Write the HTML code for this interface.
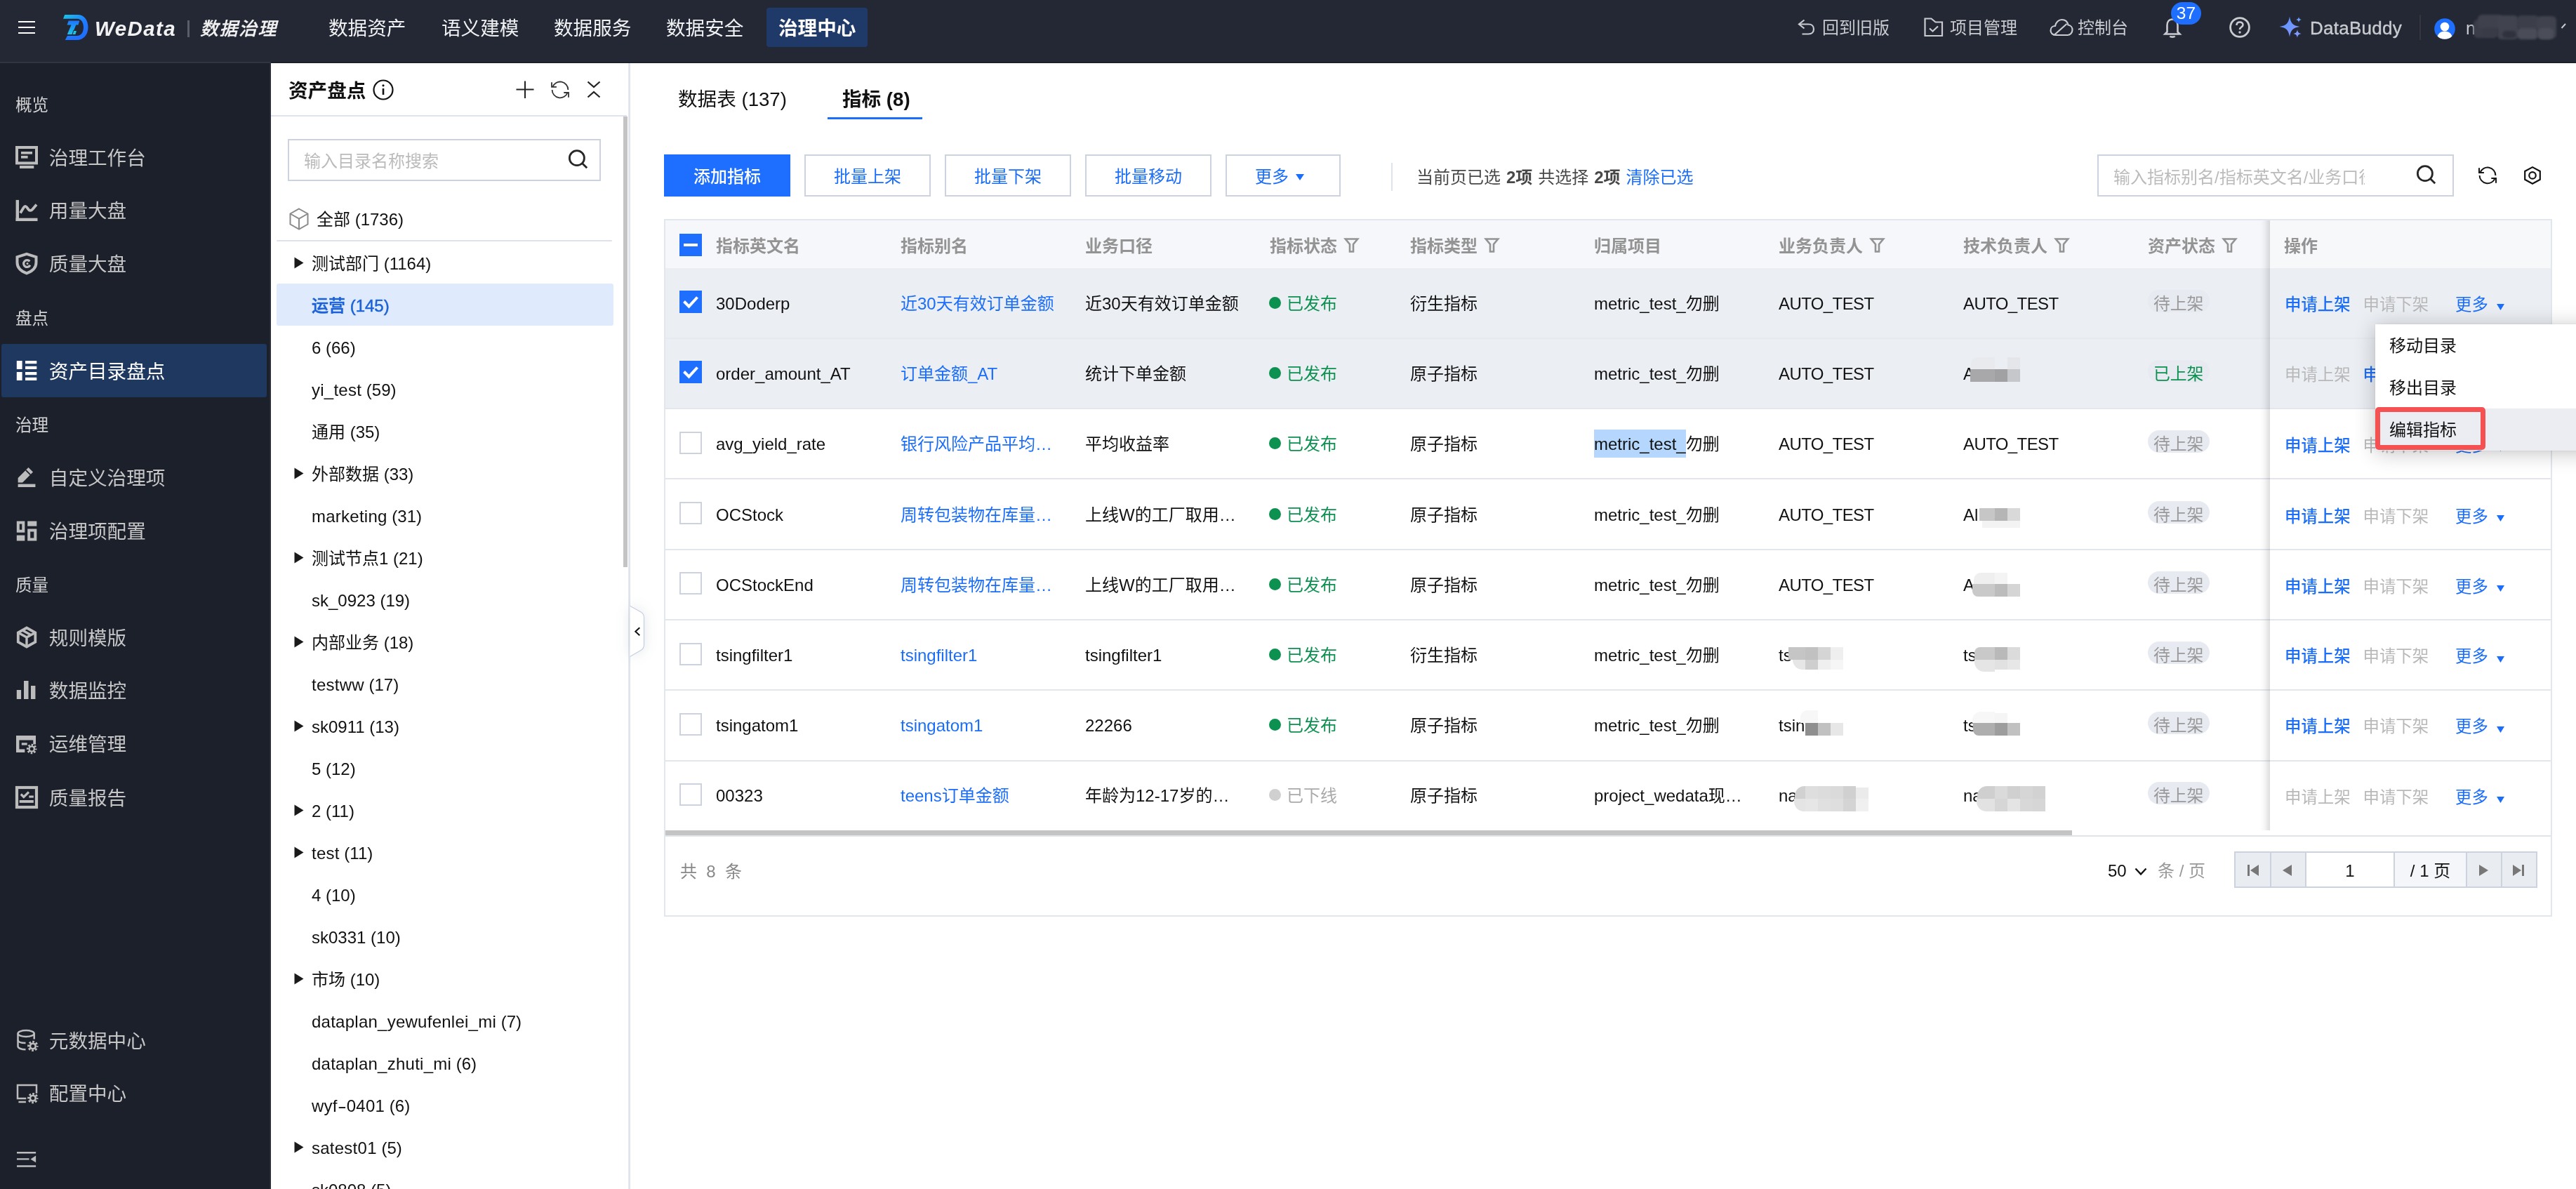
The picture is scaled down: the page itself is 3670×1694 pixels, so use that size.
<!DOCTYPE html><html lang="zh-CN"><head><meta charset="utf-8"><title>WeData 数据治理</title><style>
*{box-sizing:border-box;margin:0;padding:0}
html,body{width:3670px;height:1694px;overflow:hidden;background:#fff}
body{font-family:"Liberation Sans","Noto Sans CJK SC",sans-serif;position:relative;color:#000;-webkit-font-smoothing:antialiased}
.t{position:absolute;white-space:nowrap}
.a{position:absolute}
svg{position:absolute;overflow:visible}
</style></head><body><div id="root" style="position:absolute;left:0;top:0;width:3670px;height:1694px;will-change:transform">
<div class="a" style="left:0;top:0;width:3670px;height:90px;background:#242835"></div>
<div class="a" style="left:0;top:88px;width:3670px;height:2px;background:#1d202b"></div>
<div class="a" style="left:26px;top:29.8px;width:24px;height:2.4px;background:#fff"></div>
<div class="a" style="left:26px;top:37.8px;width:24px;height:2.4px;background:#fff"></div>
<div class="a" style="left:26px;top:45.8px;width:24px;height:2.4px;background:#fff"></div>
<svg style="left:90px;top:20.800px" width="36" height="36" viewBox="0 0 36 36">
<defs><linearGradient id="lg" x1="0" y1="0" x2="0.700" y2="1"><stop offset="0" stop-color="#19c8e6"/><stop offset="0.550" stop-color="#1f7cff"/><stop offset="1" stop-color="#1f6dff"/></linearGradient>
<linearGradient id="lg2" x1="0" y1="0" x2="0" y2="1"><stop offset="0" stop-color="#1f74ff"/><stop offset="1" stop-color="#19c4e8"/></linearGradient></defs>
<path d="M2.200 0 H20.500 C30 0 35.500 7.500 35.500 18 C35.500 28.500 29 36 19.500 36 H2.800 L6 30.100 H19.500 C25.500 30.100 29 25 29 18 C29 11 25.500 5.800 20 5.800 H0 Z" fill="url(#lg)"/>
<path d="M7.700 8.400 H23.300 L21.400 14.400 H18.300 L12.700 28 H5.800 L11.500 14.400 H5.600 Z" fill="url(#lg2)"/>
<path d="M14.300 22.300 H19.600 L17.700 28 H12.700 Z" fill="#242835"/>
<path d="M15.200 23.100 H19 L17.400 28 H13.600 Z" fill="#1ac6e4"/>
</svg>
<div class="t " style="left:135px;top:16.4px;height:50px;line-height:50px;font-size:29.5px;color:#f2f2f2;font-weight:700;font-style:italic;letter-spacing:1.400px">WeData</div>
<div class="a" style="left:267.300px;top:29px;width:2.300px;height:24px;background:#5a5e6b"></div>
<div class="t " style="left:285px;top:15.799999999999997px;height:50px;line-height:50px;font-size:26px;color:#f2f2f2;font-weight:500;font-style:italic;letter-spacing:1.500px;-webkit-text-stroke:0.300px #f2f2f2">数据治理</div>
<div class="t " style="left:468px;top:15.5px;height:50px;line-height:50px;font-size:27.6px;color:#f0f1f3;font-weight:400;">数据资产</div>
<div class="t " style="left:629px;top:15.5px;height:50px;line-height:50px;font-size:27.6px;color:#f0f1f3;font-weight:400;">语义建模</div>
<div class="t " style="left:789px;top:15.5px;height:50px;line-height:50px;font-size:27.6px;color:#f0f1f3;font-weight:400;">数据服务</div>
<div class="t " style="left:949px;top:15.5px;height:50px;line-height:50px;font-size:27.6px;color:#f0f1f3;font-weight:400;">数据安全</div>
<div class="a" style="left:1092px;top:11px;width:144px;height:56px;background:#1f3a68;border-radius:4px"></div>
<div class="t " style="left:1109px;top:15.5px;height:50px;line-height:50px;font-size:27.6px;color:#fff;font-weight:700;">治理中心</div>
<svg style="left:2561px;top:27px" width="26" height="24" viewBox="0 0 26 24" fill="none" stroke="#c9cbcf" stroke-width="2.200">
<path d="M9.500 1.500 L2 7.500 L9.500 13.500"/><path d="M2.500 7.500 H15.500 C20.500 7.500 23 10.500 23 14.500 C23 18.500 20.500 21.500 15.500 21.500 H6.500"/></svg>
<div class="t " style="left:2596px;top:14.5px;height:50px;line-height:50px;font-size:24px;color:#c9cbcf;font-weight:400;">回到旧版</div>
<svg style="left:2741px;top:25px" width="28" height="28" viewBox="0 0 28 28" fill="none" stroke="#c9cbcf" stroke-width="2.200">
<path d="M1.500 1.500 H10.500 L16.500 6.500 H26 V26 H1.500 Z"/><path d="M8 15.500 L12.500 19.500 L20 12.500"/></svg>
<div class="t " style="left:2778px;top:14.5px;height:50px;line-height:50px;font-size:24px;color:#c9cbcf;font-weight:400;">项目管理</div>
<svg style="left:2920px;top:26px" width="34" height="26" viewBox="0 0 34 26" fill="none" stroke="#c9cbcf" stroke-width="2.200">
<path d="M9 24 C4.500 24 1.500 21 1.500 17.500 C1.500 13.500 4.500 11 8 11 C9 5.500 13 2 17.500 2 C22.500 2 25.500 5 26.500 9.500 C30 10 32.500 13 32.500 16.500 C32.500 21 29 24 25.500 24 Z"/><path d="M24.500 8 L7 23.500"/></svg>
<div class="t " style="left:2960px;top:14.5px;height:50px;line-height:50px;font-size:24px;color:#c9cbcf;font-weight:400;">控制台</div>
<svg style="left:3083px;top:26px" width="24" height="28" viewBox="0 0 24 28" fill="none" stroke="#c9cbcf" stroke-width="2.600">
<path d="M12 1.500 C7 1.500 4.500 5.500 4.500 10 V19.500 L1.500 22.500 H22.500 L19.500 19.500 V10 C19.500 5.500 17 1.500 12 1.500 Z"/><path d="M8.500 25.500 C9.500 27 14.500 27 15.500 25.500"/></svg>
<div class="a" style="left:3093px;top:3px;width:43px;height:32px;border-radius:16px;background:#1e6fff"></div>
<div class="t " style="left:3093px;top:4.0px;height:30px;line-height:30px;font-size:24.5px;color:#fff;font-weight:400;width:43px;text-align:center">37</div>
<svg style="left:3176px;top:24px" width="30" height="30" viewBox="0 0 30 30" fill="none" stroke="#c9cbcf" stroke-width="2.800">
<circle cx="15" cy="15" r="13.400"/><path d="M10.500 12 C10.500 9 12.500 7.500 15 7.500 C17.500 7.500 19.500 9 19.500 11.500 C19.500 14.500 15 14.500 15 18" stroke-width="2.600"/><circle cx="15" cy="22" r="1.700" fill="#c9cbcf" stroke="none"/></svg>
<svg style="left:3247px;top:23px" width="34" height="32" viewBox="0 0 34 32">
<defs><linearGradient id="sg" x1="0" y1="0" x2="1" y2="1"><stop offset="0" stop-color="#4f97ff"/><stop offset="1" stop-color="#8f95ff"/></linearGradient></defs>
<path d="M15 0.500 C16.500 10 19.500 13.500 29.500 15 C19.500 16.500 16.500 20 15 29.500 C13.500 20 10.500 16.500 0.500 15 C10.500 13.500 13.500 10 15 0.500 Z" fill="url(#sg)"/>
<path d="M28 1 C28.400 3.600 29.400 4.600 32 5 C29.400 5.400 28.400 6.400 28 9 C27.600 6.400 26.600 5.400 24 5 C26.600 4.600 27.600 3.600 28 1 Z" fill="#6ea0ff"/>
<path d="M26 19 C26.600 23 28 24.400 32 25 C28 25.600 26.600 27 26 31 C25.400 27 24 25.600 20 25 C24 24.400 25.400 23 26 19 Z" fill="#7f9aff"/>
</svg>
<div class="t " style="left:3291px;top:15.0px;height:50px;line-height:50px;font-size:26px;color:#c9cbcf;font-weight:400;letter-spacing:0.25px;-webkit-text-stroke:0.4px #c9cbcf">DataBuddy</div>
<div class="a" style="left:3447px;top:21px;width:2px;height:36px;background:#35363d"></div>
<svg style="left:3468px;top:26px" width="30" height="30" viewBox="0 0 30 30">
<defs><clipPath id="av"><circle cx="15" cy="15" r="14.800"/></clipPath></defs>
<circle cx="15" cy="15" r="14.800" fill="#1e6fff"/>
<g clip-path="url(#av)" fill="#fff"><circle cx="15" cy="12" r="6.300"/><path d="M3.500 30 C4.500 22 9 18.500 15 18.500 C21 18.500 25.500 22 26.500 30 Z"/></g></svg>
<div class="t " style="left:3513px;top:15.0px;height:50px;line-height:50px;font-size:25px;color:#c9cbcf;font-weight:400;">n</div>
<div class="a" style="left:3524px;top:28px;width:34px;height:26px;background:#3b3e49;filter:blur(1.5px);border-radius:6px"></div>
<div class="a" style="left:3530px;top:21px;width:36px;height:20px;background:#3f424d;filter:blur(1.5px);border-radius:6px"></div>
<div class="a" style="left:3558px;top:22px;width:30px;height:34px;background:#41444f;filter:blur(1.5px);border-radius:6px"></div>
<div class="a" style="left:3586px;top:22px;width:32px;height:20px;background:#3c3f4a;filter:blur(1.5px);border-radius:6px"></div>
<div class="a" style="left:3586px;top:40px;width:30px;height:16px;background:#4a4d58;filter:blur(1.5px);border-radius:6px"></div>
<div class="a" style="left:3614px;top:23px;width:28px;height:32px;background:#40434e;filter:blur(1.5px);border-radius:6px"></div>
<div class="a" style="left:3536px;top:40px;width:24px;height:12px;background:#393c47;filter:blur(1.5px);border-radius:6px"></div>
<div class="a" style="left:3616px;top:40px;width:22px;height:16px;background:#4b4e59;filter:blur(1.5px);border-radius:6px"></div>
<div class="a" style="left:3565px;top:44px;width:20px;height:10px;background:#30333e;filter:blur(1.5px);border-radius:6px"></div>
<svg style="left:3649px;top:33px" width="8" height="8" viewBox="0 0 8 8" fill="none" stroke="#c9cbcf" stroke-width="2"><path d="M0.500 7 L6 1"/></svg>
<div class="a" style="left:0;top:90px;width:386px;height:1604px;background:#1c202b"></div>
<div class="a" style="left:0;top:88px;width:386px;height:2px;background:#2f3441"></div>
<div class="a" style="left:384px;top:90px;width:2px;height:1604px;background:#2a2e3a"></div>
<div class="a" style="left:2px;top:490px;width:378px;height:76px;background:#1f3860;border-radius:3px"></div>
<div class="t " style="left:22px;top:129.5px;height:40px;line-height:40px;font-size:23.6px;color:#d2d2d3;font-weight:400;">概览</div>
<div class="t " style="left:22px;top:433.5px;height:40px;line-height:40px;font-size:23.6px;color:#d2d2d3;font-weight:400;">盘点</div>
<div class="t " style="left:22px;top:585.5px;height:40px;line-height:40px;font-size:23.6px;color:#d2d2d3;font-weight:400;">治理</div>
<div class="t " style="left:22px;top:813.5px;height:40px;line-height:40px;font-size:23.6px;color:#d2d2d3;font-weight:400;">质量</div>
<svg style="left:22px;top:208px" width="32" height="32" viewBox="0 0 32 32" fill="none" stroke="#bcbcbd" stroke-width="4"><rect x="2" y="2" width="28" height="22.400"/><rect x="8" y="8" width="16" height="3.600" fill="#bcbcbd" stroke="none"/><rect x="8" y="13.900" width="9.600" height="3.700" fill="#bcbcbd" stroke="none"/><rect x="6" y="28" width="20.300" height="4" fill="#bcbcbd" stroke="none"/></svg>
<div class="t " style="left:69.8px;top:203.5px;height:44px;line-height:44px;font-size:27.6px;color:#c6c6c7;font-weight:400;">治理工作台</div>
<svg style="left:22px;top:283px" width="32" height="32" viewBox="0 0 32 32" fill="none" stroke="#bcbcbd" stroke-width="4"><rect x="0.600" y="1.900" width="4.400" height="30.100" fill="#bcbcbd" stroke="none"/><rect x="0.600" y="27.700" width="30.900" height="4.300" fill="#bcbcbd" stroke="none"/><path d="M7 20.500 L11.500 13 C13.500 10 15.500 10.500 17.500 14 C19.500 17.500 22 18 24.500 15 L30 8.500" stroke-width="3.800"/></svg>
<div class="t " style="left:69.8px;top:278.5px;height:44px;line-height:44px;font-size:27.6px;color:#c6c6c7;font-weight:400;">用量大盘</div>
<svg style="left:22px;top:359px" width="32" height="32" viewBox="0 0 32 32" fill="none" stroke="#bcbcbd" stroke-width="4"><path d="M16 2.800 L29.500 7.200 V15 C29.500 22.500 24 27.500 16 30.300 C8 27.500 2.500 22.500 2.500 15 V7.200 Z" stroke-width="4"/><path d="M20.300 13.400 A4.900 4.900 0 1 0 20.900 18.800" stroke-width="3.200"/><circle cx="17" cy="16.400" r="1.500" fill="#bcbcbd" stroke="none"/></svg>
<div class="t " style="left:69.8px;top:354.5px;height:44px;line-height:44px;font-size:27.6px;color:#c6c6c7;font-weight:400;">质量大盘</div>
<svg style="left:22px;top:512px" width="32" height="32" viewBox="0 0 32 32" fill="none" stroke="#fff" stroke-width="4"><rect x="1.800" y="2" width="7.800" height="12" fill="#fff" stroke="none"/><rect x="1.800" y="18" width="7.800" height="12" fill="#fff" stroke="none"/><rect x="14" y="2" width="16.300" height="4.200" fill="#fff" stroke="none"/><rect x="14" y="9.8" width="16.300" height="4.200" fill="#fff" stroke="none"/><rect x="14" y="18" width="16.300" height="4.200" fill="#fff" stroke="none"/><rect x="14" y="25.8" width="16.300" height="4.200" fill="#fff" stroke="none"/></svg>
<div class="t " style="left:69.8px;top:507.5px;height:44px;line-height:44px;font-size:27.6px;color:#fff;font-weight:400;">资产目录盘点</div>
<svg style="left:22px;top:664px" width="32" height="32" viewBox="0 0 32 32" fill="none" stroke="#bcbcbd" stroke-width="4"><path d="M3.600 23.500 V17 L18.500 2.100 L25 8.600 L10.100 23.500 Z" fill="#bcbcbd" stroke="none"/><path d="M14.800 5.800 L21.300 12.300" stroke="#1c202b" stroke-width="1.800"/><rect x="3.600" y="25.600" width="24.800" height="4.400" fill="#bcbcbd" stroke="none"/></svg>
<div class="t " style="left:69.8px;top:659.5px;height:44px;line-height:44px;font-size:27.6px;color:#c6c6c7;font-weight:400;">自定义治理项</div>
<svg style="left:22px;top:740px" width="32" height="32" viewBox="0 0 32 32" fill="none" stroke="#bcbcbd" stroke-width="4"><rect x="3.800" y="4.500" width="7.500" height="12.200"/><rect x="19.200" y="15.500" width="9.100" height="13"/><rect x="17.200" y="2.500" width="13.100" height="7.100" fill="#bcbcbd" stroke="none"/><rect x="1.800" y="22.600" width="11.500" height="7.900" fill="#bcbcbd" stroke="none"/></svg>
<div class="t " style="left:69.8px;top:735.5px;height:44px;line-height:44px;font-size:27.6px;color:#c6c6c7;font-weight:400;">治理项配置</div>
<svg style="left:22px;top:892px" width="32" height="32" viewBox="0 0 32 32" fill="none" stroke="#bcbcbd" stroke-width="4"><path d="M16 2.500 L28.300 9.300 V22.700 L16 29.500 L3.800 22.700 V9.300 Z" stroke-width="3.800"/><path d="M3.800 9.300 L16 16 L28.300 9.300 M16 16 V29.500 M10 6 L22.200 12.700" stroke-width="3.400"/></svg>
<div class="t " style="left:69.8px;top:887.5px;height:44px;line-height:44px;font-size:27.6px;color:#c6c6c7;font-weight:400;">规则模版</div>
<svg style="left:22px;top:967px" width="32" height="32" viewBox="0 0 32 32" fill="none" stroke="#bcbcbd" stroke-width="4"><rect x="1.800" y="16" width="6.300" height="13" fill="#bcbcbd" stroke="none"/><rect x="12" y="3" width="6.500" height="26" fill="#bcbcbd" stroke="none"/><rect x="22" y="10" width="6.400" height="19" fill="#bcbcbd" stroke="none"/></svg>
<div class="t " style="left:69.8px;top:962.5px;height:44px;line-height:44px;font-size:27.6px;color:#c6c6c7;font-weight:400;">数据监控</div>
<svg style="left:22px;top:1043px" width="32" height="32" viewBox="0 0 32 32" fill="none" stroke="#bcbcbd" stroke-width="4"><rect x="1" y="5" width="28" height="6.500" fill="#bcbcbd" stroke="none"/><rect x="1" y="5" width="4.400" height="24" fill="#bcbcbd" stroke="none"/><rect x="1" y="24.400" width="12.300" height="4.600" fill="#bcbcbd" stroke="none"/><rect x="8.800" y="15.300" width="7.900" height="3.300" fill="#bcbcbd" stroke="none"/><rect x="25.300" y="5" width="3.700" height="12.500" fill="#bcbcbd" stroke="none"/><circle cx="23.2" cy="24" r="4.8" fill="#bcbcbd" stroke="none"/><circle cx="23.2" cy="24" r="5.8" fill="none" stroke="#bcbcbd" stroke-width="3" stroke-dasharray="2.505 2.050" stroke-dashoffset="1.253"/><circle cx="23.2" cy="24" r="2.500" fill="#1c202b" stroke="none"/></svg>
<div class="t " style="left:69.8px;top:1038.5px;height:44px;line-height:44px;font-size:27.6px;color:#c6c6c7;font-weight:400;">运维管理</div>
<svg style="left:22px;top:1120px" width="32" height="32" viewBox="0 0 32 32" fill="none" stroke="#bcbcbd" stroke-width="4"><rect x="2" y="2" width="28" height="28" stroke-width="4.200"/><path d="M7.800 11.500 L11.800 15.500 L19 8.500" stroke-width="3.200"/><rect x="19.300" y="13.500" width="6.500" height="3.100" fill="#bcbcbd" stroke="none"/><rect x="5.700" y="20" width="20.100" height="3.800" fill="#bcbcbd" stroke="none"/></svg>
<div class="t " style="left:69.8px;top:1115.5px;height:44px;line-height:44px;font-size:27.6px;color:#c6c6c7;font-weight:400;">质量报告</div>
<svg style="left:22px;top:1466px" width="32" height="32" viewBox="0 0 32 32" fill="none" stroke="#bcbcbd" stroke-width="4"><ellipse cx="15.100" cy="6.500" rx="11.600" ry="4.400" stroke-width="2.500"/><path d="M3.500 6.500 V24.500 C3.500 27.500 8.500 29.300 14.500 29.300" stroke-width="2.500"/><path d="M26.700 6.500 V14.500" stroke-width="2.500"/><path d="M3.500 15.500 C3.500 18.500 8.500 20 14.500 20" stroke-width="2.500"/><circle cx="24.8" cy="24.4" r="5.2" fill="#bcbcbd" stroke="none"/><circle cx="24.8" cy="24.4" r="6.2" fill="none" stroke="#bcbcbd" stroke-width="3" stroke-dasharray="2.678 2.191" stroke-dashoffset="1.339"/><circle cx="24.8" cy="24.4" r="2.500" fill="#1c202b" stroke="none"/></svg>
<div class="t " style="left:69.8px;top:1461.5px;height:44px;line-height:44px;font-size:27.6px;color:#c6c6c7;font-weight:400;">元数据中心</div>
<svg style="left:22px;top:1541px" width="32" height="32" viewBox="0 0 32 32" fill="none" stroke="#bcbcbd" stroke-width="4"><path d="M15.300 24 H3 V4.900 H30 V16.700" stroke-width="2.500"/><path d="M4.400 29 H14.900" stroke-width="2.500"/><circle cx="24.8" cy="23.6" r="5.2" fill="#bcbcbd" stroke="none"/><circle cx="24.8" cy="23.6" r="6.2" fill="none" stroke="#bcbcbd" stroke-width="3" stroke-dasharray="2.678 2.191" stroke-dashoffset="1.339"/><circle cx="24.8" cy="23.6" r="2.500" fill="#1c202b" stroke="none"/></svg>
<div class="t " style="left:69.8px;top:1536.5px;height:44px;line-height:44px;font-size:27.6px;color:#c6c6c7;font-weight:400;">配置中心</div>
<svg style="left:24.300px;top:1639px" width="28" height="26" viewBox="0 0 28 26" fill="none" stroke="#bcbcbd" stroke-width="2.400">
<path d="M0 3.300 H27.100 M0 12.400 H17.500 M0 22.500 H27.100"/><path d="M27.100 7.500 L19.500 12.400 L27.100 17.300 Z" fill="#bcbcbd" stroke="none"/></svg>
<div class="a" style="left:386px;top:90px;width:508px;height:1604px;background:#fff"></div>
<div class="a" style="left:894.500px;top:90px;width:3px;height:1604px;background:linear-gradient(90deg,#e6eaf1,#dce1ea)"></div>
<div class="t " style="left:411px;top:107.5px;height:44px;line-height:44px;font-size:27.6px;color:#111;font-weight:700;">资产盘点</div>
<svg style="left:531px;top:113px" width="30" height="30" viewBox="0 0 30 30" fill="none" stroke="#111" stroke-width="2.200">
<circle cx="15" cy="15" r="13.500"/><path d="M15 13 V22" stroke-width="2.600"/><circle cx="15" cy="8.800" r="1.600" fill="#111" stroke="none"/></svg>
<svg style="left:735px;top:115px" width="26" height="26" viewBox="0 0 26 26" fill="none" stroke="#222" stroke-width="2">
<path d="M13 0.500 V25 M0.500 12.500 H25.500"/></svg>
<svg style="left:784px;top:113.500px" width="28" height="28" viewBox="0 0 28 28" fill="none" stroke="#333" stroke-width="1.800">
<path d="M25.400 13.900 A11.400 11.400 0 0 0 3.300 10"/><path d="M2 3.200 V9.900 H8.900"/>
<path d="M2.600 13.900 A11.400 11.400 0 0 0 24.700 17.800"/><path d="M19.300 18 H26 V24.800"/></svg>
<svg style="left:836px;top:115px" width="20" height="25" viewBox="0 0 20 25" fill="none" stroke="#222" stroke-width="2.200">
<path d="M1.500 1.500 L10 9 L18.500 1.500"/><path d="M1.500 23.500 L10 16 L18.500 23.500"/></svg>
<div class="a" style="left:386px;top:163.500px;width:507px;height:2px;background:#dfe4ec"></div>
<div class="a" style="left:888px;top:166px;width:6px;height:642px;background:#c4c4c4"></div>
<div class="a" style="left:410px;top:198px;width:446px;height:60px;border:2px solid #ccd3df;background:#fff"></div>
<div class="t " style="left:433px;top:210.0px;height:40px;line-height:40px;font-size:24px;color:#bbb;font-weight:400;">输入目录名称搜索</div>
<svg style="left:810px;top:213px" width="28" height="28" viewBox="0 0 28 28" fill="none" stroke="#262626" stroke-width="2.800">
<circle cx="11.900" cy="12.200" r="10.500"/><path d="M19.300 19.600 L26.200 26.300"/></svg>
<svg style="left:412px;top:296px" width="28" height="32" viewBox="0 0 28 32" fill="none" stroke="#8a8a8a" stroke-width="2">
<path d="M14 1.500 L26.500 8.500 V23.500 L14 30.500 L1.500 23.500 V8.500 Z"/><path d="M1.500 8.500 L14 15.500 L26.500 8.500 M14 15.500 V30.500"/></svg>
<div class="t " style="left:451px;top:293.3px;height:40px;line-height:40px;font-size:24px;color:#111;font-weight:400;">全部 (1736)</div>
<div class="a" style="left:394px;top:341.500px;width:478px;height:2.500px;background:#dde2ea;border-radius:2px"></div>
<svg style="left:419px;top:366px" width="14" height="17" viewBox="0 0 14 17"><path d="M0.500 0.500 L13.500 8.500 L0.500 16.500 Z" fill="#1a1a1a"/></svg>
<div class="t " style="left:444px;top:355.7px;height:40px;line-height:40px;font-size:24px;color:#111;font-weight:400;">测试部门 (1164)</div>
<div class="a" style="left:394px;top:404px;width:480px;height:60px;background:#dfebfc;border-radius:3px"></div>
<div class="t " style="left:444px;top:415.7px;height:40px;line-height:40px;font-size:24px;color:#1b62d9;font-weight:500;-webkit-text-stroke:0.5px #1b62d9">运营 (145)</div>
<div class="t " style="left:444px;top:475.7px;height:40px;line-height:40px;font-size:24px;color:#111;font-weight:400;">6 (66)</div>
<div class="t " style="left:444px;top:535.7px;height:40px;line-height:40px;font-size:24px;color:#111;font-weight:400;"><span style="letter-spacing:0.250px">yi_test</span> (59)</div>
<div class="t " style="left:444px;top:595.7px;height:40px;line-height:40px;font-size:24px;color:#111;font-weight:400;">通用 (35)</div>
<svg style="left:419px;top:666px" width="14" height="17" viewBox="0 0 14 17"><path d="M0.500 0.500 L13.500 8.500 L0.500 16.500 Z" fill="#1a1a1a"/></svg>
<div class="t " style="left:444px;top:655.7px;height:40px;line-height:40px;font-size:24px;color:#111;font-weight:400;">外部数据 (33)</div>
<div class="t " style="left:444px;top:715.7px;height:40px;line-height:40px;font-size:24px;color:#111;font-weight:400;"><span style="letter-spacing:0.250px">marketing</span> (31)</div>
<svg style="left:419px;top:786px" width="14" height="17" viewBox="0 0 14 17"><path d="M0.500 0.500 L13.500 8.500 L0.500 16.500 Z" fill="#1a1a1a"/></svg>
<div class="t " style="left:444px;top:775.7px;height:40px;line-height:40px;font-size:24px;color:#111;font-weight:400;">测试节点1 (21)</div>
<div class="t " style="left:444px;top:835.7px;height:40px;line-height:40px;font-size:24px;color:#111;font-weight:400;">sk_0923 (19)</div>
<svg style="left:419px;top:906px" width="14" height="17" viewBox="0 0 14 17"><path d="M0.500 0.500 L13.500 8.500 L0.500 16.500 Z" fill="#1a1a1a"/></svg>
<div class="t " style="left:444px;top:895.7px;height:40px;line-height:40px;font-size:24px;color:#111;font-weight:400;">内部业务 (18)</div>
<div class="t " style="left:444px;top:955.7px;height:40px;line-height:40px;font-size:24px;color:#111;font-weight:400;"><span style="letter-spacing:0.250px">testww</span> (17)</div>
<svg style="left:419px;top:1026px" width="14" height="17" viewBox="0 0 14 17"><path d="M0.500 0.500 L13.500 8.500 L0.500 16.500 Z" fill="#1a1a1a"/></svg>
<div class="t " style="left:444px;top:1015.7px;height:40px;line-height:40px;font-size:24px;color:#111;font-weight:400;">sk0911 (13)</div>
<div class="t " style="left:444px;top:1075.7px;height:40px;line-height:40px;font-size:24px;color:#111;font-weight:400;">5 (12)</div>
<svg style="left:419px;top:1146px" width="14" height="17" viewBox="0 0 14 17"><path d="M0.500 0.500 L13.500 8.500 L0.500 16.500 Z" fill="#1a1a1a"/></svg>
<div class="t " style="left:444px;top:1135.7px;height:40px;line-height:40px;font-size:24px;color:#111;font-weight:400;">2 (11)</div>
<svg style="left:419px;top:1206px" width="14" height="17" viewBox="0 0 14 17"><path d="M0.500 0.500 L13.500 8.500 L0.500 16.500 Z" fill="#1a1a1a"/></svg>
<div class="t " style="left:444px;top:1195.7px;height:40px;line-height:40px;font-size:24px;color:#111;font-weight:400;"><span style="letter-spacing:0.250px">test</span> (11)</div>
<div class="t " style="left:444px;top:1255.7px;height:40px;line-height:40px;font-size:24px;color:#111;font-weight:400;">4 (10)</div>
<div class="t " style="left:444px;top:1315.7px;height:40px;line-height:40px;font-size:24px;color:#111;font-weight:400;">sk0331 (10)</div>
<svg style="left:419px;top:1386px" width="14" height="17" viewBox="0 0 14 17"><path d="M0.500 0.500 L13.500 8.500 L0.500 16.500 Z" fill="#1a1a1a"/></svg>
<div class="t " style="left:444px;top:1375.7px;height:40px;line-height:40px;font-size:24px;color:#111;font-weight:400;">市场 (10)</div>
<div class="t " style="left:444px;top:1435.7px;height:40px;line-height:40px;font-size:24px;color:#111;font-weight:400;"><span style="letter-spacing:0.250px">dataplan_yewufenlei_mi</span> (7)</div>
<div class="t " style="left:444px;top:1495.7px;height:40px;line-height:40px;font-size:24px;color:#111;font-weight:400;"><span style="letter-spacing:0.250px">dataplan_zhuti_mi</span> (6)</div>
<div class="t " style="left:444px;top:1555.7px;height:40px;line-height:40px;font-size:24px;color:#111;font-weight:400;"><span style="letter-spacing:0.250px">wyf<span style="display:inline-block;width:13px;text-align:center;transform:scaleX(1.600)">-</span>0401</span> (6)</div>
<svg style="left:419px;top:1626px" width="14" height="17" viewBox="0 0 14 17"><path d="M0.500 0.500 L13.500 8.500 L0.500 16.500 Z" fill="#1a1a1a"/></svg>
<div class="t " style="left:444px;top:1615.7px;height:40px;line-height:40px;font-size:24px;color:#111;font-weight:400;"><span style="letter-spacing:0.250px">satest01</span> (5)</div>
<div class="t " style="left:444px;top:1675.7px;height:40px;line-height:40px;font-size:24px;color:#111;font-weight:400;">sk0808 (5)</div>
<svg style="left:896px;top:862px;filter:drop-shadow(0 0 9px rgba(40,60,90,0.13))" width="26" height="76" viewBox="0 0 26 76">
<path d="M1.500 1.200 L17 10 Q21.500 12.500 21.500 18 V56.500 Q21.500 62 17 64.500 L1.500 73.500 Z" fill="#fff" stroke="none"/>
<path d="M1.500 1.200 L17 10 Q21.500 12.500 21.500 18 V56.500 Q21.500 62 17 64.500 L1.500 73.500" fill="none" stroke="#c6cfdf" stroke-width="1.200"/>
<path d="M15.300 32.200 L9.300 37.700 L15.300 43.200" fill="none" stroke="#111" stroke-width="2"/></svg>
<div class="t " style="left:966px;top:119.5px;height:44px;line-height:44px;font-size:27.6px;color:#111;font-weight:400;">数据表 (137)</div>
<div class="t " style="left:1200px;top:119.5px;height:44px;line-height:44px;font-size:27.6px;color:#111;font-weight:700;">指标 (8)</div>
<div class="a" style="left:1179px;top:166.500px;width:135px;height:3.500px;background:#1b6ef9"></div>
<div class="a" style="left:946px;top:220px;width:180px;height:60px;background:#1e6fff"></div>
<div class="t " style="left:946px;top:232.0px;height:40px;line-height:40px;font-size:24px;color:#fff;font-weight:500;width:180px;text-align:center">添加指标</div>
<div class="a" style="left:1146px;top:220px;width:180px;height:60px;border:2px solid #ccd3df;background:#fff"></div>
<div class="t " style="left:1146px;top:232.0px;height:40px;line-height:40px;font-size:24px;color:#1b6ef9;font-weight:400;width:180px;text-align:center">批量上架</div>
<div class="a" style="left:1346px;top:220px;width:180px;height:60px;border:2px solid #ccd3df;background:#fff"></div>
<div class="t " style="left:1346px;top:232.0px;height:40px;line-height:40px;font-size:24px;color:#1b6ef9;font-weight:400;width:180px;text-align:center">批量下架</div>
<div class="a" style="left:1546px;top:220px;width:180px;height:60px;border:2px solid #ccd3df;background:#fff"></div>
<div class="t " style="left:1546px;top:232.0px;height:40px;line-height:40px;font-size:24px;color:#1b6ef9;font-weight:400;width:180px;text-align:center">批量移动</div>
<div class="a" style="left:1746px;top:220px;width:164px;height:60px;border:2px solid #ccd3df;background:#fff"></div>
<div class="t " style="left:1788px;top:232.0px;height:40px;line-height:40px;font-size:24px;color:#1b6ef9;font-weight:400;">更多</div>
<svg style="left:1846px;top:248px" width="12" height="9" viewBox="0 0 12 9"><path d="M0 0 H12 L6 9 Z" fill="#1b6ef9"/></svg>
<div class="a" style="left:1982px;top:232px;width:2px;height:40px;background:#dfe3ea"></div>
<div class="t " style="left:2018px;top:232.5px;height:40px;line-height:40px;font-size:24px;color:#484848;font-weight:400;word-spacing:1.3px">当前页已选 <b style="color:#484848">2项</b> 共选择 <b style="color:#484848">2项</b> <span style="color:#1b6ef9">清除已选</span></div>
<div class="a" style="left:2988px;top:220px;width:508px;height:60px;border:2px solid #ccd3df;background:#fff"></div>
<div class="t " style="left:3011px;top:232.5px;height:40px;line-height:40px;font-size:24px;color:#bbb;font-weight:400;width:358px;overflow:hidden">输入指标别名/指标英文名/业务口径</div>
<svg style="left:3443px;top:235px" width="28" height="28" viewBox="0 0 28 28" fill="none" stroke="#262626" stroke-width="2.800">
<circle cx="11.900" cy="12.200" r="10.500"/><path d="M19.300 19.600 L26.200 26.300"/></svg>
<svg style="left:3530px;top:236px" width="28" height="28" viewBox="0 0 28 28" fill="none" stroke="#161616" stroke-width="2">
<path d="M25.400 13.900 A11.400 11.400 0 0 0 3.300 10"/><path d="M2 3.200 V9.900 H8.900"/>
<path d="M2.600 13.900 A11.400 11.400 0 0 0 24.700 17.800"/><path d="M19.300 18 H26 V24.800"/></svg>
<svg style="left:3594px;top:235px" width="28" height="30" viewBox="0 0 28 30" fill="none" stroke="#111" stroke-width="2.200">
<path d="M14 3.150 L24.800 9 V20.800 L14 26.650 L3.200 20.800 V9 Z"/><circle cx="14" cy="14.900" r="4.750"/></svg>
<div class="a" style="left:946px;top:312px;width:2690px;height:994px;border:2px solid #e2e6ed;background:#fff"></div>
<div class="a" style="left:948px;top:314px;width:2686px;height:68px;background:#f6f7fa"></div>
<div class="a" style="left:948px;top:382px;width:2686px;height:200.400px;background:#ebeef3"></div>
<div class="a" style="left:948px;top:481px;width:2686px;height:2px;background:#e6e9ef"></div>
<div class="a" style="left:948px;top:581px;width:2686px;height:2px;background:#e3e6ec"></div>
<div class="a" style="left:948px;top:680.7px;width:2686px;height:2px;background:#e3e6ec"></div>
<div class="a" style="left:948px;top:781.5px;width:2686px;height:2px;background:#e3e6ec"></div>
<div class="a" style="left:948px;top:882.1px;width:2686px;height:2px;background:#e3e6ec"></div>
<div class="a" style="left:948px;top:982.2px;width:2686px;height:2px;background:#e3e6ec"></div>
<div class="a" style="left:948px;top:1083px;width:2686px;height:2px;background:#e3e6ec"></div>
<div class="a" style="left:948px;top:1182.8px;width:2686px;height:2px;background:#e3e6ec"></div>
<div class="a" style="left:3220px;top:314px;width:14px;height:870px;background:linear-gradient(90deg,rgba(0,0,0,0),rgba(0,0,0,0.03) 40%,rgba(0,0,0,0.13))"></div>
<div class="a" style="left:3234px;top:314px;width:400px;height:68px;background:#f7f8fa"></div>
<div class="t " style="left:1020px;top:330.8px;height:40px;line-height:40px;font-size:24px;color:#939393;font-weight:700;">指标英文名</div>
<div class="t " style="left:1283px;top:330.8px;height:40px;line-height:40px;font-size:24px;color:#939393;font-weight:700;">指标别名</div>
<div class="t " style="left:1546px;top:330.8px;height:40px;line-height:40px;font-size:24px;color:#939393;font-weight:700;">业务口径</div>
<div class="t " style="left:1809px;top:330.8px;height:40px;line-height:40px;font-size:24px;color:#939393;font-weight:700;">指标状态</div>
<svg style="left:1915px;top:339px" width="21" height="21" viewBox="0 0 21 21" fill="none" stroke="#939393" stroke-width="2.600"><path d="M1.800 1.500 H19.200 L13 9 V19.500 H8 V9 Z"/></svg>
<div class="t " style="left:2009px;top:330.8px;height:40px;line-height:40px;font-size:24px;color:#939393;font-weight:700;">指标类型</div>
<svg style="left:2115px;top:339px" width="21" height="21" viewBox="0 0 21 21" fill="none" stroke="#939393" stroke-width="2.600"><path d="M1.800 1.500 H19.200 L13 9 V19.500 H8 V9 Z"/></svg>
<div class="t " style="left:2271px;top:330.8px;height:40px;line-height:40px;font-size:24px;color:#939393;font-weight:700;">归属项目</div>
<div class="t " style="left:2534px;top:330.8px;height:40px;line-height:40px;font-size:24px;color:#939393;font-weight:700;">业务负责人</div>
<svg style="left:2664px;top:339px" width="21" height="21" viewBox="0 0 21 21" fill="none" stroke="#939393" stroke-width="2.600"><path d="M1.800 1.500 H19.200 L13 9 V19.500 H8 V9 Z"/></svg>
<div class="t " style="left:2797px;top:330.8px;height:40px;line-height:40px;font-size:24px;color:#939393;font-weight:700;">技术负责人</div>
<svg style="left:2927px;top:339px" width="21" height="21" viewBox="0 0 21 21" fill="none" stroke="#939393" stroke-width="2.600"><path d="M1.800 1.500 H19.200 L13 9 V19.500 H8 V9 Z"/></svg>
<div class="t " style="left:3060px;top:330.8px;height:40px;line-height:40px;font-size:24px;color:#939393;font-weight:700;">资产状态</div>
<svg style="left:3166px;top:339px" width="21" height="21" viewBox="0 0 21 21" fill="none" stroke="#939393" stroke-width="2.600"><path d="M1.800 1.500 H19.200 L13 9 V19.500 H8 V9 Z"/></svg>
<div class="t " style="left:3254px;top:330.8px;height:40px;line-height:40px;font-size:24px;color:#939393;font-weight:700;">操作</div>
<div class="a" style="left:968px;top:333px;width:32px;height:32px;background:#1e6fff"></div>
<div class="a" style="left:974px;top:346.500px;width:20px;height:4.500px;background:#fff"></div>
<div class="a" style="left:968px;top:413.9px;width:32px;height:32px;background:#1e6fff"></div>
<svg style="left:968px;top:414.0px" width="32" height="32" viewBox="0 0 32 32" fill="none" stroke="#fff" stroke-width="4"><path d="M6.500 15.500 L13.500 22.500 L25.500 9.500"/></svg>
<div class="t " style="left:1020px;top:412.7px;height:40px;line-height:40px;font-size:24px;color:#111;font-weight:400;">30Doderp</div>
<div class="t " style="left:1283px;top:412.7px;height:40px;line-height:40px;font-size:24px;color:#1b6ef9;font-weight:400;">近30天有效订单金额</div>
<div class="t " style="left:1546px;top:412.7px;height:40px;line-height:40px;font-size:24px;color:#111;font-weight:400;">近30天有效订单金额</div>
<div class="a" style="left:1808px;top:423.0px;width:17px;height:17px;border-radius:9px;background:#0d9151"></div>
<div class="t " style="left:1833px;top:412.7px;height:40px;line-height:40px;font-size:24px;color:#0d9151;font-weight:400;">已发布</div>
<div class="t " style="left:2009px;top:412.7px;height:40px;line-height:40px;font-size:24px;color:#111;font-weight:400;">衍生指标</div>
<div class="t " style="left:2271px;top:412.7px;height:40px;line-height:40px;font-size:24px;color:#111;font-weight:400;">metric_test_勿删</div>
<div class="t " style="left:2534px;top:412.7px;height:40px;line-height:40px;font-size:24px;color:#111;font-weight:400;letter-spacing:-0.6px">AUTO_TEST</div>
<div class="t " style="left:2797px;top:412.7px;height:40px;line-height:40px;font-size:24px;color:#111;font-weight:400;letter-spacing:-0.6px">AUTO_TEST</div>
<div class="a" style="left:3060px;top:412.5px;width:88px;height:32.400px;border-radius:17px;background:#e7eaf0"></div>
<div class="t " style="left:3068px;top:412.7px;height:40px;line-height:40px;font-size:23.8px;color:#999;font-weight:400;">待上架</div>
<div class="t " style="left:3255px;top:414.2px;height:40px;line-height:40px;font-size:23.4px;color:#1b6ef9;font-weight:500;">申请上架</div>
<div class="t " style="left:3366.5px;top:414.2px;height:40px;line-height:40px;font-size:23.4px;color:#b8b8b8;font-weight:400;">申请下架</div>
<div class="t " style="left:3498px;top:414.2px;height:40px;line-height:40px;font-size:23.4px;color:#1b6ef9;font-weight:400;">更多</div>
<svg style="left:3557px;top:433.0px" width="11" height="9" viewBox="0 0 11 9"><path d="M0 0 H11 L5.500 9 Z" fill="#1b6ef9"/></svg>
<div class="a" style="left:968px;top:514.24px;width:32px;height:32px;background:#1e6fff"></div>
<svg style="left:968px;top:514.34px" width="32" height="32" viewBox="0 0 32 32" fill="none" stroke="#fff" stroke-width="4"><path d="M6.500 15.500 L13.500 22.500 L25.500 9.500"/></svg>
<div class="t " style="left:1020px;top:512.9px;height:40px;line-height:40px;font-size:24px;color:#111;font-weight:400;">order_amount_AT</div>
<div class="t " style="left:1283px;top:512.9px;height:40px;line-height:40px;font-size:24px;color:#1b6ef9;font-weight:400;">订单金额_AT</div>
<div class="t " style="left:1546px;top:512.9px;height:40px;line-height:40px;font-size:24px;color:#111;font-weight:400;">统计下单金额</div>
<div class="a" style="left:1808px;top:523.1999999999999px;width:17px;height:17px;border-radius:9px;background:#0d9151"></div>
<div class="t " style="left:1833px;top:512.9px;height:40px;line-height:40px;font-size:24px;color:#0d9151;font-weight:400;">已发布</div>
<div class="t " style="left:2009px;top:512.9px;height:40px;line-height:40px;font-size:24px;color:#111;font-weight:400;">原子指标</div>
<div class="t " style="left:2271px;top:512.9px;height:40px;line-height:40px;font-size:24px;color:#111;font-weight:400;">metric_test_勿删</div>
<div class="t " style="left:2534px;top:512.9px;height:40px;line-height:40px;font-size:24px;color:#111;font-weight:400;letter-spacing:-0.6px">AUTO_TEST</div>
<div class="t " style="left:2797px;top:512.9px;height:40px;line-height:40px;font-size:24px;color:#111;font-weight:400;">A</div>
<div class="a" style="left:3060px;top:512.6999999999999px;width:88px;height:32.400px;border-radius:17px;background:#e7eaf0"></div>
<div class="t " style="left:3068px;top:512.9px;height:40px;line-height:40px;font-size:23.8px;color:#0d9151;font-weight:400;">已上架</div>
<div class="t " style="left:3255px;top:514.4px;height:40px;line-height:40px;font-size:23.4px;color:#b8b8b8;font-weight:400;">申请上架</div>
<div class="t " style="left:3366.5px;top:514.4px;height:40px;line-height:40px;font-size:23.4px;color:#1b6ef9;font-weight:500;">申请下架</div>
<div class="t " style="left:3498px;top:514.4px;height:40px;line-height:40px;font-size:23.4px;color:#1b6ef9;font-weight:400;">更多</div>
<svg style="left:3557px;top:533.34px" width="11" height="9" viewBox="0 0 11 9"><path d="M0 0 H11 L5.500 9 Z" fill="#1b6ef9"/></svg>
<div class="a" style="left:968px;top:614.58px;width:32px;height:32px;background:#fff;border:2px solid #ccd3df"></div>
<div class="t " style="left:1020px;top:613.1px;height:40px;line-height:40px;font-size:24px;color:#111;font-weight:400;">avg_yield_rate</div>
<div class="t " style="left:1283px;top:613.1px;height:40px;line-height:40px;font-size:24px;color:#1b6ef9;font-weight:400;">银行风险产品平均…</div>
<div class="t " style="left:1546px;top:613.1px;height:40px;line-height:40px;font-size:24px;color:#111;font-weight:400;">平均收益率</div>
<div class="a" style="left:1808px;top:623.4px;width:17px;height:17px;border-radius:9px;background:#0d9151"></div>
<div class="t " style="left:1833px;top:613.1px;height:40px;line-height:40px;font-size:24px;color:#0d9151;font-weight:400;">已发布</div>
<div class="t " style="left:2009px;top:613.1px;height:40px;line-height:40px;font-size:24px;color:#111;font-weight:400;">原子指标</div>
<div class="a" style="left:2271px;top:612px;width:131px;height:40px;background:#b5d6fd"></div>
<div class="t " style="left:2271px;top:613.1px;height:40px;line-height:40px;font-size:24px;color:#111;font-weight:400;">metric_test_勿删</div>
<div class="t " style="left:2534px;top:613.1px;height:40px;line-height:40px;font-size:24px;color:#111;font-weight:400;letter-spacing:-0.6px">AUTO_TEST</div>
<div class="t " style="left:2797px;top:613.1px;height:40px;line-height:40px;font-size:24px;color:#111;font-weight:400;letter-spacing:-0.6px">AUTO_TEST</div>
<div class="a" style="left:3060px;top:612.9px;width:88px;height:32.400px;border-radius:17px;background:#e7eaf1"></div>
<div class="t " style="left:3068px;top:613.1px;height:40px;line-height:40px;font-size:23.8px;color:#999;font-weight:400;">待上架</div>
<div class="t " style="left:3255px;top:614.6px;height:40px;line-height:40px;font-size:23.4px;color:#1b6ef9;font-weight:500;">申请上架</div>
<div class="t " style="left:3366.5px;top:614.6px;height:40px;line-height:40px;font-size:23.4px;color:#b8b8b8;font-weight:400;">申请下架</div>
<div class="t " style="left:3498px;top:614.6px;height:40px;line-height:40px;font-size:23.4px;color:#1b6ef9;font-weight:400;">更多</div>
<svg style="left:3557px;top:633.6800000000001px" width="11" height="9" viewBox="0 0 11 9"><path d="M0 0 H11 L5.500 9 Z" fill="#1b6ef9"/></svg>
<div class="a" style="left:968px;top:714.92px;width:32px;height:32px;background:#fff;border:2px solid #ccd3df"></div>
<div class="t " style="left:1020px;top:714.1px;height:40px;line-height:40px;font-size:24px;color:#111;font-weight:400;">OCStock</div>
<div class="t " style="left:1283px;top:714.1px;height:40px;line-height:40px;font-size:24px;color:#1b6ef9;font-weight:400;">周转包装物在库量…</div>
<div class="t " style="left:1546px;top:714.1px;height:40px;line-height:40px;font-size:24px;color:#111;font-weight:400;">上线W的工厂取用…</div>
<div class="a" style="left:1808px;top:724.4px;width:17px;height:17px;border-radius:9px;background:#0d9151"></div>
<div class="t " style="left:1833px;top:714.1px;height:40px;line-height:40px;font-size:24px;color:#0d9151;font-weight:400;">已发布</div>
<div class="t " style="left:2009px;top:714.1px;height:40px;line-height:40px;font-size:24px;color:#111;font-weight:400;">原子指标</div>
<div class="t " style="left:2271px;top:714.1px;height:40px;line-height:40px;font-size:24px;color:#111;font-weight:400;">metric_test_勿删</div>
<div class="t " style="left:2534px;top:714.1px;height:40px;line-height:40px;font-size:24px;color:#111;font-weight:400;letter-spacing:-0.6px">AUTO_TEST</div>
<div class="t " style="left:2797px;top:714.1px;height:40px;line-height:40px;font-size:24px;color:#111;font-weight:400;">Al</div>
<div class="a" style="left:3060px;top:713.9px;width:88px;height:32.400px;border-radius:17px;background:#e7eaf1"></div>
<div class="t " style="left:3068px;top:714.1px;height:40px;line-height:40px;font-size:23.8px;color:#999;font-weight:400;">待上架</div>
<div class="t " style="left:3255px;top:715.6px;height:40px;line-height:40px;font-size:23.4px;color:#1b6ef9;font-weight:500;">申请上架</div>
<div class="t " style="left:3366.5px;top:715.6px;height:40px;line-height:40px;font-size:23.4px;color:#b8b8b8;font-weight:400;">申请下架</div>
<div class="t " style="left:3498px;top:715.6px;height:40px;line-height:40px;font-size:23.4px;color:#1b6ef9;font-weight:400;">更多</div>
<svg style="left:3557px;top:734.02px" width="11" height="9" viewBox="0 0 11 9"><path d="M0 0 H11 L5.500 9 Z" fill="#1b6ef9"/></svg>
<div class="a" style="left:968px;top:815.26px;width:32px;height:32px;background:#fff;border:2px solid #ccd3df"></div>
<div class="t " style="left:1020px;top:814.1px;height:40px;line-height:40px;font-size:24px;color:#111;font-weight:400;">OCStockEnd</div>
<div class="t " style="left:1283px;top:814.1px;height:40px;line-height:40px;font-size:24px;color:#1b6ef9;font-weight:400;">周转包装物在库量…</div>
<div class="t " style="left:1546px;top:814.1px;height:40px;line-height:40px;font-size:24px;color:#111;font-weight:400;">上线W的工厂取用…</div>
<div class="a" style="left:1808px;top:824.4px;width:17px;height:17px;border-radius:9px;background:#0d9151"></div>
<div class="t " style="left:1833px;top:814.1px;height:40px;line-height:40px;font-size:24px;color:#0d9151;font-weight:400;">已发布</div>
<div class="t " style="left:2009px;top:814.1px;height:40px;line-height:40px;font-size:24px;color:#111;font-weight:400;">原子指标</div>
<div class="t " style="left:2271px;top:814.1px;height:40px;line-height:40px;font-size:24px;color:#111;font-weight:400;">metric_test_勿删</div>
<div class="t " style="left:2534px;top:814.1px;height:40px;line-height:40px;font-size:24px;color:#111;font-weight:400;letter-spacing:-0.6px">AUTO_TEST</div>
<div class="t " style="left:2797px;top:814.1px;height:40px;line-height:40px;font-size:24px;color:#111;font-weight:400;">A</div>
<div class="a" style="left:3060px;top:813.9px;width:88px;height:32.400px;border-radius:17px;background:#e7eaf1"></div>
<div class="t " style="left:3068px;top:814.1px;height:40px;line-height:40px;font-size:23.8px;color:#999;font-weight:400;">待上架</div>
<div class="t " style="left:3255px;top:815.6px;height:40px;line-height:40px;font-size:23.4px;color:#1b6ef9;font-weight:500;">申请上架</div>
<div class="t " style="left:3366.5px;top:815.6px;height:40px;line-height:40px;font-size:23.4px;color:#b8b8b8;font-weight:400;">申请下架</div>
<div class="t " style="left:3498px;top:815.6px;height:40px;line-height:40px;font-size:23.4px;color:#1b6ef9;font-weight:400;">更多</div>
<svg style="left:3557px;top:834.36px" width="11" height="9" viewBox="0 0 11 9"><path d="M0 0 H11 L5.500 9 Z" fill="#1b6ef9"/></svg>
<div class="a" style="left:968px;top:915.6px;width:32px;height:32px;background:#fff;border:2px solid #ccd3df"></div>
<div class="t " style="left:1020px;top:913.7px;height:40px;line-height:40px;font-size:24px;color:#111;font-weight:400;">tsingfilter1</div>
<div class="t " style="left:1283px;top:913.7px;height:40px;line-height:40px;font-size:24px;color:#1b6ef9;font-weight:400;">tsingfilter1</div>
<div class="t " style="left:1546px;top:913.7px;height:40px;line-height:40px;font-size:24px;color:#111;font-weight:400;">tsingfilter1</div>
<div class="a" style="left:1808px;top:924.0px;width:17px;height:17px;border-radius:9px;background:#0d9151"></div>
<div class="t " style="left:1833px;top:913.7px;height:40px;line-height:40px;font-size:24px;color:#0d9151;font-weight:400;">已发布</div>
<div class="t " style="left:2009px;top:913.7px;height:40px;line-height:40px;font-size:24px;color:#111;font-weight:400;">衍生指标</div>
<div class="t " style="left:2271px;top:913.7px;height:40px;line-height:40px;font-size:24px;color:#111;font-weight:400;">metric_test_勿删</div>
<div class="t " style="left:2534px;top:913.7px;height:40px;line-height:40px;font-size:24px;color:#111;font-weight:400;">ts</div>
<div class="t " style="left:2797px;top:913.7px;height:40px;line-height:40px;font-size:24px;color:#111;font-weight:400;">ts</div>
<div class="a" style="left:3060px;top:913.5px;width:88px;height:32.400px;border-radius:17px;background:#e7eaf1"></div>
<div class="t " style="left:3068px;top:913.7px;height:40px;line-height:40px;font-size:23.8px;color:#999;font-weight:400;">待上架</div>
<div class="t " style="left:3255px;top:915.2px;height:40px;line-height:40px;font-size:23.4px;color:#1b6ef9;font-weight:500;">申请上架</div>
<div class="t " style="left:3366.5px;top:915.2px;height:40px;line-height:40px;font-size:23.4px;color:#b8b8b8;font-weight:400;">申请下架</div>
<div class="t " style="left:3498px;top:915.2px;height:40px;line-height:40px;font-size:23.4px;color:#1b6ef9;font-weight:400;">更多</div>
<svg style="left:3557px;top:934.7px" width="11" height="9" viewBox="0 0 11 9"><path d="M0 0 H11 L5.500 9 Z" fill="#1b6ef9"/></svg>
<div class="a" style="left:968px;top:1015.9399999999999px;width:32px;height:32px;background:#fff;border:2px solid #ccd3df"></div>
<div class="t " style="left:1020px;top:1013.8px;height:40px;line-height:40px;font-size:24px;color:#111;font-weight:400;">tsingatom1</div>
<div class="t " style="left:1283px;top:1013.8px;height:40px;line-height:40px;font-size:24px;color:#1b6ef9;font-weight:400;">tsingatom1</div>
<div class="t " style="left:1546px;top:1013.8px;height:40px;line-height:40px;font-size:24px;color:#111;font-weight:400;">22266</div>
<div class="a" style="left:1808px;top:1024.1px;width:17px;height:17px;border-radius:9px;background:#0d9151"></div>
<div class="t " style="left:1833px;top:1013.8px;height:40px;line-height:40px;font-size:24px;color:#0d9151;font-weight:400;">已发布</div>
<div class="t " style="left:2009px;top:1013.8px;height:40px;line-height:40px;font-size:24px;color:#111;font-weight:400;">原子指标</div>
<div class="t " style="left:2271px;top:1013.8px;height:40px;line-height:40px;font-size:24px;color:#111;font-weight:400;">metric_test_勿删</div>
<div class="t " style="left:2534px;top:1013.8px;height:40px;line-height:40px;font-size:24px;color:#111;font-weight:400;">tsin</div>
<div class="t " style="left:2797px;top:1013.8px;height:40px;line-height:40px;font-size:24px;color:#111;font-weight:400;">ts</div>
<div class="a" style="left:3060px;top:1013.5999999999999px;width:88px;height:32.400px;border-radius:17px;background:#e7eaf1"></div>
<div class="t " style="left:3068px;top:1013.8px;height:40px;line-height:40px;font-size:23.8px;color:#999;font-weight:400;">待上架</div>
<div class="t " style="left:3255px;top:1015.3px;height:40px;line-height:40px;font-size:23.4px;color:#1b6ef9;font-weight:500;">申请上架</div>
<div class="t " style="left:3366.5px;top:1015.3px;height:40px;line-height:40px;font-size:23.4px;color:#b8b8b8;font-weight:400;">申请下架</div>
<div class="t " style="left:3498px;top:1015.3px;height:40px;line-height:40px;font-size:23.4px;color:#1b6ef9;font-weight:400;">更多</div>
<svg style="left:3557px;top:1035.04px" width="11" height="9" viewBox="0 0 11 9"><path d="M0 0 H11 L5.500 9 Z" fill="#1b6ef9"/></svg>
<div class="a" style="left:968px;top:1116.2800000000002px;width:32px;height:32px;background:#fff;border:2px solid #ccd3df"></div>
<div class="t " style="left:1020px;top:1114.0px;height:40px;line-height:40px;font-size:24px;color:#111;font-weight:400;">00323</div>
<div class="t " style="left:1283px;top:1114.0px;height:40px;line-height:40px;font-size:24px;color:#1b6ef9;font-weight:400;">teens订单金额</div>
<div class="t " style="left:1546px;top:1114.0px;height:40px;line-height:40px;font-size:24px;color:#111;font-weight:400;">年龄为12-17岁的…</div>
<div class="a" style="left:1808px;top:1124.3px;width:17px;height:17px;border-radius:9px;background:#d0d0d0"></div>
<div class="t " style="left:1833px;top:1114.0px;height:40px;line-height:40px;font-size:24px;color:#aaa;font-weight:400;">已下线</div>
<div class="t " style="left:2009px;top:1114.0px;height:40px;line-height:40px;font-size:24px;color:#111;font-weight:400;">原子指标</div>
<div class="t " style="left:2271px;top:1114.0px;height:40px;line-height:40px;font-size:24px;color:#111;font-weight:400;">project_wedata现…</div>
<div class="t " style="left:2534px;top:1114.0px;height:40px;line-height:40px;font-size:24px;color:#111;font-weight:400;">na</div>
<div class="t " style="left:2797px;top:1114.0px;height:40px;line-height:40px;font-size:24px;color:#111;font-weight:400;">na</div>
<div class="a" style="left:3060px;top:1113.8px;width:88px;height:32.400px;border-radius:17px;background:#e7eaf1"></div>
<div class="t " style="left:3068px;top:1114.0px;height:40px;line-height:40px;font-size:23.8px;color:#999;font-weight:400;">待上架</div>
<div class="t " style="left:3255px;top:1115.5px;height:40px;line-height:40px;font-size:23.4px;color:#b8b8b8;font-weight:400;">申请上架</div>
<div class="t " style="left:3366.5px;top:1115.5px;height:40px;line-height:40px;font-size:23.4px;color:#b8b8b8;font-weight:400;">申请下架</div>
<div class="t " style="left:3498px;top:1115.5px;height:40px;line-height:40px;font-size:23.4px;color:#1b6ef9;font-weight:400;">更多</div>
<svg style="left:3557px;top:1135.38px" width="11" height="9" viewBox="0 0 11 9"><path d="M0 0 H11 L5.500 9 Z" fill="#1b6ef9"/></svg>
<div class="a" style="left:2808px;top:509px;width:34px;height:17px;background:#e9eaee;border-radius:9px 0 0 0"></div>
<div class="a" style="left:2860px;top:509px;width:18px;height:17px;background:#e4e6ea;border-radius:0"></div>
<div class="a" style="left:2807px;top:526px;width:53px;height:18px;background:#a8a8ab;border-radius:0"></div>
<div class="a" style="left:2842px;top:526px;width:18px;height:18px;background:#a1a1a4;border-radius:0"></div>
<div class="a" style="left:2860px;top:526px;width:18px;height:18px;background:#c5c7ca;border-radius:0"></div>
<div class="a" style="left:2820px;top:724px;width:22px;height:18px;background:#c6c6c6;border-radius:0"></div>
<div class="a" style="left:2842px;top:724px;width:18px;height:18px;background:#b5b5b5;border-radius:0"></div>
<div class="a" style="left:2860px;top:724px;width:18px;height:18px;background:#d9d9d9;border-radius:0"></div>
<div class="a" style="left:2824px;top:742px;width:54px;height:10px;background:#f3f3f3;border-radius:0"></div>
<div class="a" style="left:2812px;top:816px;width:30px;height:16px;background:#efefef;border-radius:10px 0 0 0"></div>
<div class="a" style="left:2842px;top:816px;width:18px;height:16px;background:#f4f4f4;border-radius:0"></div>
<div class="a" style="left:2810px;top:832px;width:32px;height:18px;background:#c9c9c9;border-radius:0 0 0 8px"></div>
<div class="a" style="left:2842px;top:832px;width:18px;height:18px;background:#bcbcbc;border-radius:0"></div>
<div class="a" style="left:2860px;top:832px;width:18px;height:18px;background:#d5d5d5;border-radius:0"></div>
<div class="a" style="left:2548px;top:922px;width:24px;height:18px;background:#c5c5c5;border-radius:0"></div>
<div class="a" style="left:2572px;top:922px;width:18px;height:18px;background:#c1c1c1;border-radius:0"></div>
<div class="a" style="left:2590px;top:922px;width:18px;height:18px;background:#d5d5d5;border-radius:0"></div>
<div class="a" style="left:2608px;top:922px;width:18px;height:18px;background:#efefef;border-radius:0"></div>
<div class="a" style="left:2554px;top:940px;width:18px;height:14px;background:#e6e6e6;border-radius:0 0 0 14px"></div>
<div class="a" style="left:2572px;top:940px;width:18px;height:14px;background:#cecece;border-radius:0"></div>
<div class="a" style="left:2590px;top:940px;width:18px;height:14px;background:#efefef;border-radius:0"></div>
<div class="a" style="left:2608px;top:940px;width:18px;height:14px;background:#f6f6f6;border-radius:0"></div>
<div class="a" style="left:2813px;top:922px;width:29px;height:18px;background:#c9c9c9;border-radius:8px 0 0 0"></div>
<div class="a" style="left:2842px;top:922px;width:18px;height:18px;background:#b9b9b9;border-radius:0"></div>
<div class="a" style="left:2860px;top:922px;width:18px;height:18px;background:#dbdbdb;border-radius:0"></div>
<div class="a" style="left:2813px;top:940px;width:29px;height:17px;background:#e5e5e5;border-radius:0 0 0 14px"></div>
<div class="a" style="left:2842px;top:940px;width:18px;height:14px;background:#e1e1e1;border-radius:0"></div>
<div class="a" style="left:2860px;top:940px;width:18px;height:14px;background:#e7e7e7;border-radius:0"></div>
<div class="a" style="left:2565px;top:1012px;width:25px;height:18px;background:#f7f7f7;border-radius:10px 0 0 0"></div>
<div class="a" style="left:2572px;top:1030px;width:18px;height:18px;background:#8f8f8f;border-radius:0"></div>
<div class="a" style="left:2590px;top:1030px;width:18px;height:18px;background:#c1c1c1;border-radius:0"></div>
<div class="a" style="left:2608px;top:1030px;width:18px;height:18px;background:#e7e7e7;border-radius:0"></div>
<div class="a" style="left:2810px;top:1014px;width:32px;height:16px;background:#f7f7f7;border-radius:12px 0 0 0"></div>
<div class="a" style="left:2842px;top:1016px;width:18px;height:14px;background:#f5f5f5;border-radius:0"></div>
<div class="a" style="left:2811px;top:1030px;width:31px;height:18px;background:#aeaeae;border-radius:0 0 0 8px"></div>
<div class="a" style="left:2842px;top:1030px;width:18px;height:18px;background:#9d9d9d;border-radius:0"></div>
<div class="a" style="left:2860px;top:1030px;width:18px;height:18px;background:#c1c1c1;border-radius:0"></div>
<div class="a" style="left:2557px;top:1120px;width:15px;height:18px;background:#d1d1d1;border-radius:14px 0 0 0"></div>
<div class="a" style="left:2572px;top:1120px;width:18px;height:18px;background:#dedede;border-radius:0"></div>
<div class="a" style="left:2590px;top:1120px;width:18px;height:18px;background:#dcdcdc;border-radius:0"></div>
<div class="a" style="left:2608px;top:1120px;width:18px;height:18px;background:#dadada;border-radius:0"></div>
<div class="a" style="left:2626px;top:1120px;width:18px;height:18px;background:#d0d0d0;border-radius:0"></div>
<div class="a" style="left:2644px;top:1122px;width:18px;height:16px;background:#ebebeb;border-radius:0"></div>
<div class="a" style="left:2556px;top:1138px;width:16px;height:18px;background:#e4e4e4;border-radius:0 0 0 14px"></div>
<div class="a" style="left:2572px;top:1138px;width:18px;height:18px;background:#e6e6e6;border-radius:0"></div>
<div class="a" style="left:2590px;top:1138px;width:18px;height:18px;background:#e0e0e0;border-radius:0"></div>
<div class="a" style="left:2608px;top:1138px;width:18px;height:18px;background:#dedede;border-radius:0"></div>
<div class="a" style="left:2626px;top:1138px;width:18px;height:18px;background:#d4d4d4;border-radius:0"></div>
<div class="a" style="left:2644px;top:1138px;width:18px;height:18px;background:#f0f0f0;border-radius:0"></div>
<div class="a" style="left:2817px;top:1120px;width:25px;height:18px;background:#cfcfcf;border-radius:14px 0 0 0"></div>
<div class="a" style="left:2842px;top:1120px;width:18px;height:18px;background:#dadada;border-radius:0"></div>
<div class="a" style="left:2860px;top:1120px;width:18px;height:18px;background:#d0d0d0;border-radius:0"></div>
<div class="a" style="left:2878px;top:1120px;width:18px;height:18px;background:#d6d6d6;border-radius:0"></div>
<div class="a" style="left:2896px;top:1120px;width:18px;height:18px;background:#d2d2d2;border-radius:0"></div>
<div class="a" style="left:2816px;top:1138px;width:26px;height:18px;background:#e2e2e2;border-radius:0 0 0 14px"></div>
<div class="a" style="left:2842px;top:1138px;width:18px;height:18px;background:#d6d6d6;border-radius:0"></div>
<div class="a" style="left:2860px;top:1138px;width:18px;height:18px;background:#e4e4e4;border-radius:0"></div>
<div class="a" style="left:2878px;top:1138px;width:18px;height:18px;background:#d8d8d8;border-radius:0"></div>
<div class="a" style="left:2896px;top:1138px;width:18px;height:18px;background:#d6d6d6;border-radius:0"></div>
<div class="a" style="left:948px;top:1183px;width:2686px;height:8px;background:#fff"></div>
<div class="a" style="left:948px;top:1183px;width:2004px;height:7px;background:#c4c4c4"></div>
<div class="a" style="left:948px;top:1190px;width:2686px;height:2px;background:#dfe3ea"></div>
<div class="t " style="left:969px;top:1221.5px;height:40px;line-height:40px;font-size:24px;color:#888;font-weight:400;">共&nbsp; 8 &nbsp;条</div>
<div class="t " style="left:3003px;top:1220.7px;height:40px;line-height:40px;font-size:24px;color:#111;font-weight:400;">50</div>
<svg style="left:3041px;top:1236px" width="18" height="12" viewBox="0 0 18 12" fill="none" stroke="#111" stroke-width="2.400"><path d="M1.500 1.500 L9 9.500 L16.500 1.500"/></svg>
<div class="t " style="left:3074px;top:1220.7px;height:40px;line-height:40px;font-size:24px;color:#999;font-weight:400;">条 / 页</div>
<div class="a" style="left:3183px;top:1213px;width:432px;height:52px;background:#e9ecf1;border:2px solid #ccd3df"></div>
<div class="a" style="left:3284px;top:1215px;width:128px;height:48px;background:#fff;border-left:2px solid #ccd3df;border-right:2px solid #ccd3df"></div>
<div class="a" style="left:3412px;top:1215px;width:101px;height:48px;background:#f5f6f9"></div>
<div class="a" style="left:3233.5px;top:1215px;width:2px;height:48px;background:#ccd3df"></div>
<div class="a" style="left:3512.5px;top:1215px;width:2px;height:48px;background:#ccd3df"></div>
<div class="a" style="left:3562.5px;top:1215px;width:2px;height:48px;background:#ccd3df"></div>
<div class="t " style="left:3284px;top:1220.7px;height:40px;line-height:40px;font-size:24px;color:#111;font-weight:400;width:128px;text-align:center">1</div>
<div class="t " style="left:3412px;top:1220.7px;height:40px;line-height:40px;font-size:24px;color:#111;font-weight:400;width:101px;text-align:center">/ 1 页</div>
<svg style="left:3202px;top:1232px" width="16" height="16" viewBox="0 0 16 16"><rect x="0" y="0" width="3" height="16" fill="#777"/><path d="M16 0 V16 L4 8 Z" fill="#777"/></svg>
<svg style="left:3252px;top:1232px" width="13" height="16" viewBox="0 0 13 16"><path d="M13 0 V16 L0 8 Z" fill="#777"/></svg>
<svg style="left:3532px;top:1232px" width="13" height="16" viewBox="0 0 13 16"><path d="M0 0 V16 L13 8 Z" fill="#777"/></svg>
<svg style="left:3580px;top:1232px" width="16" height="16" viewBox="0 0 16 16"><rect x="13" y="0" width="3" height="16" fill="#777"/><path d="M0 0 V16 L12 8 Z" fill="#777"/></svg>
<div class="a" style="left:3384px;top:462px;width:320px;height:180px;background:#fff;box-shadow:0 3px 28px rgba(0,0,0,0.24),0 0 3px rgba(0,0,0,0.08)"></div>
<div class="a" style="left:3384px;top:582px;width:320px;height:60px;background:#ebedf2"></div>
<div class="t " style="left:3404px;top:472.5px;height:40px;line-height:40px;font-size:24px;color:#111;font-weight:400;">移动目录</div>
<div class="t " style="left:3404px;top:532.5px;height:40px;line-height:40px;font-size:24px;color:#111;font-weight:400;">移出目录</div>
<div class="t " style="left:3404px;top:592.5px;height:40px;line-height:40px;font-size:24px;color:#111;font-weight:400;">编辑指标</div>
<div class="a" style="left:3384.300px;top:580.200px;width:156.400px;height:61.200px;border:7.500px solid #f65152;border-radius:5px"></div>
</div></body></html>
